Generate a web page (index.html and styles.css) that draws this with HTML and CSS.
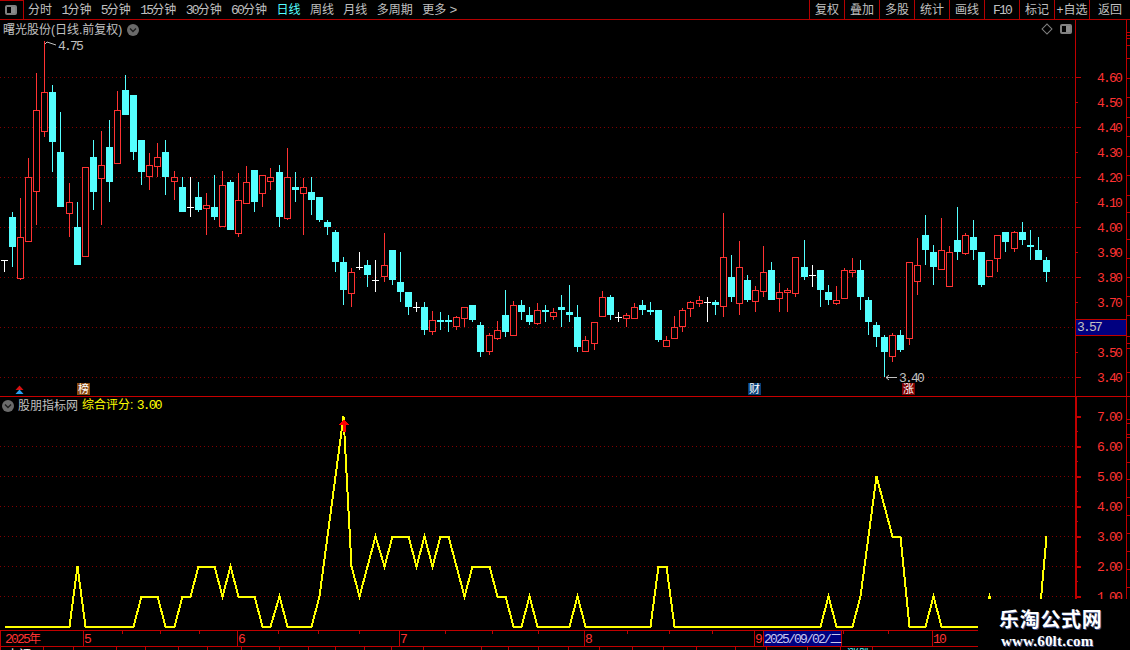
FILE: index.html
```html
<!DOCTYPE html>
<html lang="zh-CN">
<head>
<meta charset="utf-8">
<title>曙光股份 日线</title>
<link rel="stylesheet" href="styles.css">
</head>
<body>
<div class="app">
  <header class="toolbar">
    <div class="toggle"><span class="panel-icon"></span></div>
    <nav class="periods">
      <span>分时</span>
      <span><b class="num">1</b>分钟</span>
      <span><b class="num">5</b>分钟</span>
      <span><b class="num">15</b>分钟</span>
      <span><b class="num">30</b>分钟</span>
      <span><b class="num">60</b>分钟</span>
      <span class="active">日线</span>
      <span>周线</span>
      <span>月线</span>
      <span>多周期</span>
      <span>更多 <b class="num">&gt;</b></span>
    </nav>
    <nav class="actions">
      <span>复权</span><span>叠加</span><span>多股</span><span>统计</span><span>画线</span>
      <span><b class="num">F10</b></span><span>标记</span><span>+自选</span><span>返回</span>
    </nav>
  </header>

  <section class="pane pane-main">
    <svg id="mainChart" class="chart" viewBox="0 20 1130 376"></svg>
    <div class="legend legend-main">
      <span>曙光股份(日线.前复权)</span>
      <svg class="chevron" viewBox="0 0 12 12"><circle cx="6" cy="6" r="6"/><path d="M3 4.5 L6 7.5 L9 4.5"/></svg>
    </div>
    <div class="pane-tools">
      <span class="diamond"></span>
      <span class="panel-icon"></span>
    </div>
  </section>

  <section class="pane pane-sub">
    <svg id="subChart" class="chart" viewBox="0 397 1130 233"></svg>
    <div class="legend legend-sub">
      <svg class="chevron" viewBox="0 0 12 12"><circle cx="6" cy="6" r="6"/><path d="M3 4.5 L6 7.5 L9 4.5"/></svg>
      <span>股朋指标网</span>
      <span class="score">综合评分: <b class="num">3.00</b></span>
    </div>
  </section>

  <div class="date-axis">
    <span class="month month-0"><b class="num">2025</b>年</span>
    <span class="month month-5"><b class="num">5</b></span>
    <span class="month month-6"><b class="num">6</b></span>
    <span class="month month-7"><b class="num">7</b></span>
    <span class="month month-8"><b class="num">8</b></span>
    <span class="month month-9"><b class="num">9</b></span>
    <span class="month month-10"><b class="num">10</b></span>
    <svg id="dateTicks" class="date-ticks" viewBox="0 0 1130 4"></svg>
    <span class="cursor-date"><b class="num">2025/09/02/</b>二</span>
  </div>

  <div id="status" class="status"></div>

  <div class="watermark">
    <div class="wm-name">乐淘公式网</div>
    <div class="wm-url">www.60lt.com</div>
  </div>
</div>
<script src="script.js"></script>
</body>
</html>
```
FILE: styles.css
```css
* { box-sizing: border-box; }
html, body { margin: 0; height: 100%; background: #000; overflow: hidden; }
body {
  font: 12px/1 "Liberation Sans", "Noto Sans CJK SC", sans-serif;
  color: #c0c0c0;
}
.app {
  position: relative;
  width: 1130px;
  height: 650px;
  display: flex;
  flex-direction: column;
  overflow: hidden;
}
.num {
  font-family: "Liberation Mono", monospace;
  font-size: 13px;
  font-weight: normal;
  letter-spacing: -1.8px;
}

/* toolbar */
.toolbar {
  height: 20px;
  flex: none;
  display: flex;
  border-bottom: 1px solid #b40000;
  line-height: 20px;
}
.toggle {
  width: 24px;
  border-top: 1px solid #b40000;
  border-right: 1px solid #b40000;
  display: flex;
  align-items: center;
  justify-content: center;
  padding-right: 1px;
}
.panel-icon {
  display: block;
  width: 12px;
  height: 10px;
  border: 2px solid #808080;
  border-radius: 2px;
  background: linear-gradient(to right, #000 55%, #8c8c8c 55%);
}
.periods {
  display: flex;
  gap: 9.4px;
  padding-left: 4px;
  white-space: nowrap;
}
.periods .active { color: #54ffff; }
.actions {
  margin-left: auto;
  display: flex;
  white-space: nowrap;
}
.actions span {
  width: 35px;
  text-align: center;
  border-left: 1px solid #b40000;
}
.actions span:last-child { width: 41px; }

/* panes */
.pane { position: relative; flex: none; }
.pane-main { height: 377px; border-bottom: 1px solid #c80000; }
.pane-sub { height: 233px; }
.chart { display: block; width: 1130px; height: 100%; }
.legend {
  position: absolute;
  display: flex;
  align-items: center;
  white-space: nowrap;
  line-height: 14px;
}
.legend-main { left: 3px; top: 3px; gap: 5px; }
.legend-sub { left: 2px; top: 1px; gap: 4px; }
.legend-sub .score { color: #ffff00; }
.chevron { width: 12px; height: 12px; flex: none; }
.chevron circle { fill: #6a6a6a; }
.chevron path { fill: none; stroke: #1c1c1c; stroke-width: 1.4; }
.pane-tools {
  position: absolute;
  left: 1042px;
  top: 4px;
  display: flex;
  align-items: center;
  gap: 8px;
}
.diamond {
  display: block;
  width: 8px;
  height: 8px;
  margin: 0 1px;
  border: 1px solid #808080;
  transform: rotate(45deg);
}

/* chart drawing */
.grid { stroke: #800000; stroke-width: 1; stroke-dasharray: 1 3; shape-rendering: crispEdges; }
.axis { stroke: #c00000; stroke-width: 1; shape-rendering: crispEdges; }
.axis-bold { stroke: #c00000; stroke-width: 2; shape-rendering: crispEdges; }
.up-wick, .up-body { stroke: #ff3232; }
.up-wick, .flat-wick, .down-wick { stroke-width: 1; shape-rendering: crispEdges; }
.up-body { fill: #000; stroke-width: 1; shape-rendering: crispEdges; }
.down-wick { stroke: #54ffff; }
.down-body { fill: #54ffff; shape-rendering: crispEdges; }
.flat-wick { stroke: #fff; }
.score-line { fill: none; stroke: #ffff00; stroke-width: 2; stroke-linejoin: miter; shape-rendering: crispEdges; }
.peak { fill: #ff0000; shape-rendering: crispEdges; }
.axis-label {
  font-family: "Liberation Mono", monospace;
  font-size: 13px;
  letter-spacing: -1.8px;
  fill: #ff3232;
}
.price-note {
  font-family: "Liberation Mono", monospace;
  font-size: 13px;
  letter-spacing: -1.8px;
  fill: #c0c0c0;
}
.price-arrow { fill: none; stroke: #c0c0c0; stroke-width: 1; }
.last-box { fill: #000080; stroke: #c00000; shape-rendering: crispEdges; }
.badge-text { font-size: 11px; fill: #fff; text-anchor: middle; }
.badge-brown { fill: #8a4a10; }
.badge-blue { fill: #0a3f78; }
.badge-red { fill: #800000; }
.mark-red { fill: #d81010; }
.mark-blue { fill: #2aa0f0; }

/* date axis */
.date-axis {
  position: relative;
  flex: none;
  height: 17px;
  display: flex;
  border-top: 1px solid #c00000;
  border-bottom: 1px solid #c00000;
  color: #ff3232;
  line-height: 17px;
}
.month { flex: none; border-left: 1px solid #c00000; white-space: nowrap; }
.month-0 { width: 83px; padding-left: 4px; }
.month-5 { width: 154px; }
.month-6 { width: 162px; }
.month-7 { width: 185px; }
.month-8 { width: 170px; }
.month-9 { width: 178px; }
.month-10 { width: 198px; }
.date-ticks { position: absolute; left: 0; top: 0; width: 1130px; height: 4px; }
.cursor-date {
  position: absolute;
  left: 763px;
  top: -1px;
  width: 79px;
  height: 17px;
  background: #000080;
  border: 1px solid #c00000;
  color: #c8c8f0;
  line-height: 16px;
  white-space: nowrap;
}

/* status bar, only its top edge is inside the window */
.status {
  flex: none;
  height: 14px;
  display: flex;
  line-height: 16px;
  white-space: nowrap;
  color: #fff;
}
.status span { flex: none; border-left: 1px solid #c00000; padding-left: 6px; overflow: hidden; }
.status .cyan { color: #54ffff; }

/* watermark */
.watermark {
  position: absolute;
  left: 978px;
  top: 599px;
  width: 152px;
  height: 51px;
  background: #000;
  padding: 10px 0 0 21px;
  color: #fff;
  text-shadow: 1px 1px 0 #3a4a80;
}
.wm-name { font-size: 20px; font-weight: bold; line-height: 22px; letter-spacing: .7px; white-space: nowrap; }
.wm-url {
  margin-top: 2px;
  margin-left: 2px;
  font: bold 15px/16px "Liberation Serif", serif;
  letter-spacing: .2px;
  white-space: nowrap;
}
```
FILE: script.js
```js
const NS = 'http://www.w3.org/2000/svg';

function add(parent, tag, attrs, text) {
  const el = document.createElementNS(NS, tag);
  for (const k in attrs) el.setAttribute(k, attrs[k]);
  if (text !== undefined) el.textContent = text;
  parent.appendChild(el);
  return el;
}
const hline = (p, cls, x1, x2, y) => add(p, 'line', { class: cls, x1, x2, y1: y, y2: y });
const vline = (p, cls, x, y1, y2) => add(p, 'line', { class: cls, x1: x, x2: x, y1, y2 });

/* type, high, body top, body bottom, low: values read at 3x, per row group */
const groups = [
  [40, [
    ['f',660,660,661,695],['d',516,531,621,681],['u',474,592,713,720],['u',354,412,602,602],
    ['u',99,211,452,555],['u',3,157,272,291],['d',135,156,306,396],['d',216,336,501,501],
    ['u',430,487,518,591],['d',486,561,675,675],['u',382,382,647,647],['d',300,351,456,510],
    ['u',273,376,413,555],['d',240,321,426,486],['u',153,211,368,368],['d',105,150,225,225],
    ['d',165,165,336,360],['d',300,300,396,435],['u',339,376,407,450],['u',309,352,377,411],
    ['d',300,336,411,465],['u',393,412,422,480],['d',411,441,516,516],['f',411,501,502,531],
    ['d',426,471,510,516],['u',459,496,503,585],['d',405,501,531,540],['u',393,436,557,557],
    ['d',420,426,570,570],['u',399,481,578,591],['u',378,427,488,488],['d',390,390,486,516],
    ['u',405,406,458,501],['u',384,412,422,450],['d',375,396,531,561]
  ]],
  [140, [
    ['u',24,112,233,240],['d',96,141,150,186],['u',114,142,158,285],['d',111,156,180,225],
    ['d',171,171,240,246],['d',240,246,261,285],['d',270,276,366,396],['d',351,366,450,495],
    ['u',384,397,458,501],['f',336,382,383,390],['d',360,375,405,441],['f',360,421,422,456],
    ['u',279,376,407,426],['d',330,330,420,435],['d',336,426,456,486],['d',456,456,501,525],
    ['f',486,501,502,516],['d',486,501,570,585],['u',513,541,572,585],['d',516,540,546,570],
    ['d',525,540,546,576],['u',528,532,557,570],['u',501,502,533,561],['d',495,495,540,546],
    ['d',546,555,636,651],['u',579,586,632,645],['u',543,571,593,600],['d',450,525,576,591],
    ['u',483,496,586,586],['d',480,495,516,540],['d',501,525,546,555],['u',489,511,548,555],
    ['d',495,510,516,546],['u',504,517,527,540]
  ]],
  [200, [
    ['d',285,321,330,381],['d',255,336,345,366],['d',315,351,441,456],['u',408,421,452,456],
    ['u',366,367,428,450],['u',273,292,347,351],['d',285,291,345,360],['f',336,351,352,366],
    ['u',339,346,353,381],['u',309,322,353,353],['d',300,315,330,345],['d',306,330,336,345],
    ['d',330,330,420,426],['u',408,421,437,441],['u',348,382,413,413],['u',324,331,377,396],
    ['u',303,307,323,351],['u',288,301,308,321],['f',291,306,307,366],['d',300,306,315,345],
    ['u',39,172,317,351],['d',165,231,291,306],['u',123,202,308,345],['d',225,240,300,306],
    ['u',258,271,302,336],['u',138,217,272,291],['d',186,210,300,300],['u',249,277,293,336],
    ['u',264,271,277,336],['u',172,172,278,291],['d',120,201,231,240],['f',195,226,227,261],
    ['d',210,210,270,321],['d',255,276,300,315],['u',258,301,308,315],
    ['u',204,211,293,293],['u',174,211,217,231],['d',180,210,291,330],['d',291,300,366,405],
    ['d',366,375,411,441],['d',405,411,456,530],['u',400,406,467,486],['d',390,405,450,456],
    ['u',187,187,413,435],['u',114,196,242,285],['d',45,105,150,195],['d',135,156,201,255],
    ['u',54,151,208,210],['u',138,157,257,257],['d',21,120,156,180],['u',99,106,158,165],
    ['d',60,111,150,180],['d',156,156,255,261],['u',181,181,227,231],['u',106,106,173,216],
    ['d',96,96,126,156],['u',93,97,143,156],['d',66,96,120,135],['d',90,135,141,180],
    ['d',111,150,180,180],['d',171,180,216,246]
  ]]
];

const barX = i => Math.floor(4.4 + 8.077 * i) + 0.5;
const px = (base, z) => Math.round(base + z / 3);

const main = document.getElementById('mainChart');
const sub = document.getElementById('subChart');

/* main pane: grid and axis */
[77, 127, 177, 227, 277, 327, 377].forEach(y => hline(main, 'grid', 0, 1075, y + 0.5));
vline(main, 'axis', 1075.5, 20, 396);
vline(main, 'axis', 1126.5, 20, 396);
for (let y = 77; y <= 377; y += 50) hline(main, 'axis', 1075, 1081, y + 0.5);
for (let y = 102; y <= 352; y += 50) hline(main, 'axis', 1075, 1078, y + 0.5);
[[4.6, 77], [4.5, 102], [4.4, 127], [4.3, 152], [4.2, 177], [4.1, 202], [4.0, 227], [3.9, 252], [3.8, 277], [3.7, 302], [3.5, 352], [3.4, 377]]
  .forEach(([v, y]) => add(main, 'text', { class: 'axis-label', x: 1097, y: y + 5 }, v.toFixed(2)));
[32, 35, 38, 58, 78, 97, 117, 136, 156, 175, 195, 212, 258, 277, 296, 315, 343, 348, 372]
  .forEach(y => hline(main, 'axis', 1127, 1130, y + 0.5));
[45, 239, 336].forEach(y => hline(main, 'axis', 1126, 1130, y + 0.5));

/* main pane: candles */
let index = 0;
groups.forEach(([base, rows]) => {
  rows.forEach(([type, hi, top, bot, lo]) => {
    const x = barX(index++);
    const h = px(base, hi), t = px(base, top), b = px(base, bot), l = px(base, lo);
    if (type === 'd') {
      vline(main, 'down-wick', x, h, l);
      add(main, 'rect', { class: 'down-body', x: x - 3.5, y: t, width: 7, height: Math.max(b - t, 2) });
    } else if (type === 'u') {
      vline(main, 'up-wick', x, h, l);
      add(main, 'rect', { class: 'up-body', x: x - 3, y: t + 0.5, width: 6, height: Math.max(b - t, 1) });
    } else {
      vline(main, 'flat-wick', x, h, l);
      hline(main, 'flat-wick', x - 3.5, x + 3.5, t + 0.5);
    }
  });
});

/* main pane: high, low, last price and event marks */
add(main, 'path', { class: 'price-arrow', d: 'M45 44 L47 42 L50 43 L53 44 L56 45' });
add(main, 'text', { class: 'price-note', x: 58, y: 50 }, '4.75');
add(main, 'path', { class: 'price-arrow', d: 'M897 377.5 H886 M889 375 L886 377.5 L889 380' });
add(main, 'text', { class: 'price-note', x: 899, y: 382 }, '3.40');
add(main, 'rect', { class: 'last-box', x: 1075.5, y: 319.5, width: 51, height: 16 });
add(main, 'text', { class: 'price-note', x: 1077, y: 331 }, '3.57');
[['榜', 77, 'badge-brown'], ['财', 748, 'badge-blue'], ['涨', 902, 'badge-red']].forEach(([t, x, cls]) => {
  add(main, 'rect', { class: cls, x, y: 383, width: 13, height: 12 });
  add(main, 'text', { class: 'badge-text', x: x + 6.5, y: 393 }, t);
});
add(main, 'path', { class: 'mark-red', d: 'M19.5 385.5 L23.5 390 H15.5 Z' });
add(main, 'path', { class: 'mark-blue', d: 'M19.5 389.5 L23.5 394 H15.5 Z' });

/* sub pane: grid and axis */
for (let k = 1; k <= 6; k++) hline(sub, 'grid', 0, 1075, 416.5 + 30 * k);
add(sub, 'line', { class: 'axis-bold', x1: 1076, x2: 1076, y1: 397, y2: 630 });
vline(sub, 'axis', 1126.5, 397, 630);
for (let k = 0; k <= 6; k++) {
  const y = 416.5 + 30 * k;
  hline(sub, 'axis-bold', 1076, 1081, y);
  add(sub, 'text', { class: 'axis-label', x: 1097, y: y + 4.5 }, (7 - k).toFixed(2));
  if (k < 6) hline(sub, 'axis', 1076, 1078, y + 15);
}
[419, 423, 434, 462, 479, 497, 515, 533, 551, 569, 587, 605, 623].forEach(y => hline(sub, 'axis', 1127, 1130, y + 0.5));
hline(sub, 'axis', 1126, 1130, 437.5);

/* sub pane: score line */
const scores = new Array(130).fill(0);
const setRange = (a, b, v) => { for (let i = a; i <= b; i++) scores[i] = v; };
[[9,2],[22,1],[23,1],[27,1],[28,2],[34,1],[39,1],[40,3],[41,5],[42,7],[43,2],[44,1],[45,2],[46,3],[47,2],
 [51,2],[52,3],[53,2],[54,3],[55,3],[56,2],[57,1],[61,1],[62,1],[65,1],[71,1],[102,1],[106,1],[107,3],
 [108,5],[109,4],[110,3],[111,3],[115,1],[122,1],[129,3]].forEach(([i, v]) => { scores[i] = v; });
setRange(17, 19, 1); setRange(24, 26, 2); setRange(29, 31, 1); setRange(48, 50, 3);
setRange(58, 60, 2); setRange(81, 82, 2);
add(sub, 'polyline', {
  class: 'score-line',
  points: scores.map((v, i) => `${barX(i)},${626.5 - 30 * v}`).join(' ')
});
add(sub, 'path', { class: 'peak', d: 'M344 419 L349 425 H345.5 V432 H342.5 V425 H339 Z' });

/* date axis ticks */
const dateTicks = document.getElementById('dateTicks');
[122, 160, 199, 278, 318, 359, 445, 492, 538, 627, 669, 712, 843, 888]
  .forEach(x => vline(dateTicks, 'axis', x + 0.5, 0, 3));

/* status bar cells */
const status = document.getElementById('status');
const edges = [0, 43, 73, 116, 145, 178, 207, 241, 279, 308, 335, 364, 391, 423, 481, 508, 538, 568, 599, 632, 663, 696, 735, 766, 807, 840, 872, 1130];
const labels = { 0: '上证', 1: '3', 25: '涨跌' };
edges.slice(0, -1).forEach((x, i) => {
  const cell = document.createElement('span');
  cell.style.width = (edges[i + 1] - x) + 'px';
  if (labels[i]) cell.textContent = labels[i];
  if (i === 25) cell.className = 'cyan';
  status.appendChild(cell);
});
```
